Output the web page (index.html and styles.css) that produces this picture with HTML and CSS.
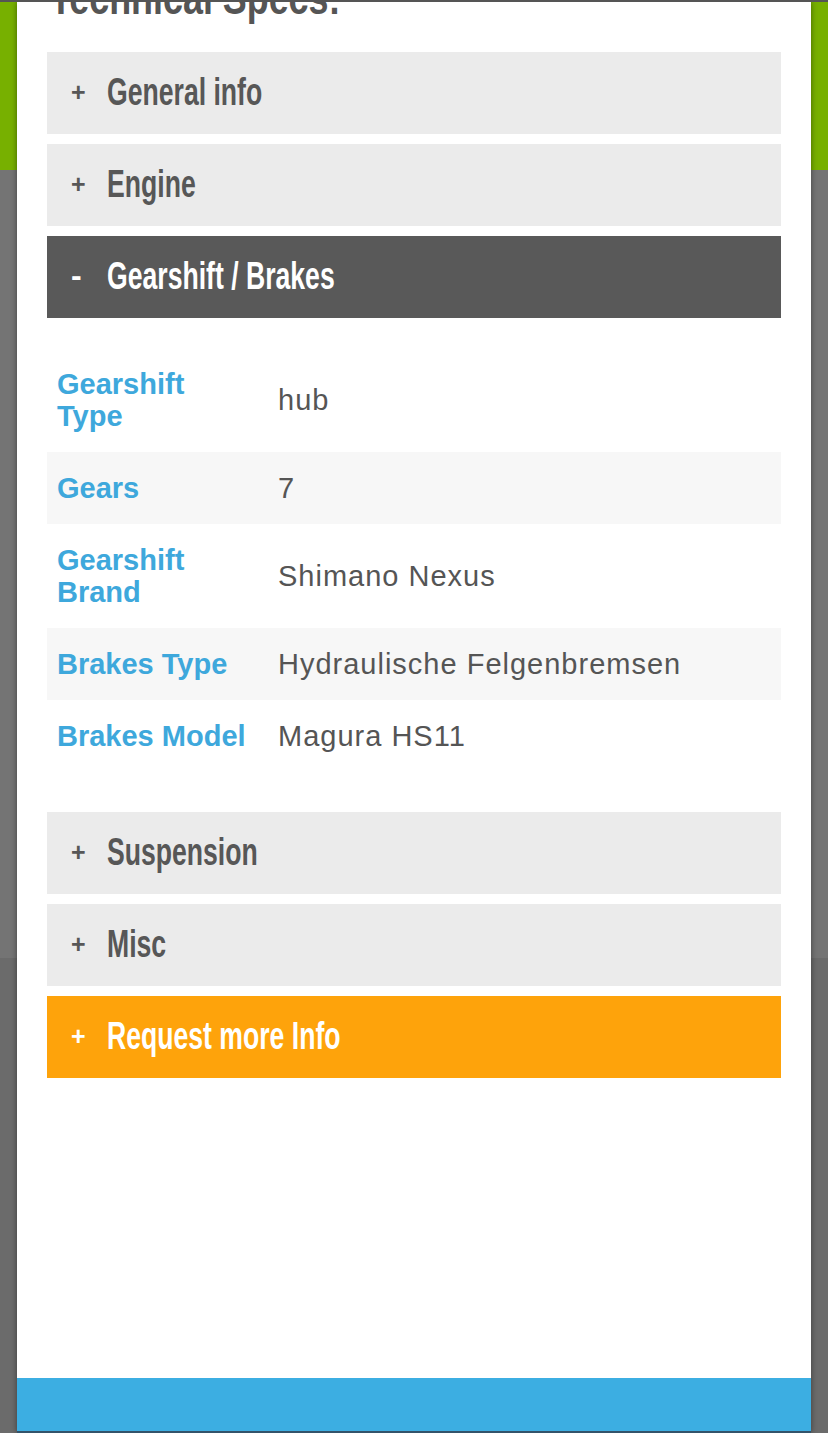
FILE: index.html
```html
<!DOCTYPE html>
<html lang="en">
<head>
<meta charset="utf-8">
<title>Technical Specs</title>
<link rel="stylesheet" href="styles.css">
</head>
<body>
<div class="backdrop">
  <div class="band-green"></div>
  <div class="band-gray"></div>
  <div class="band-gray-low"></div>
</div>
<div class="modal">
  <div class="modal-body">
    <h2 class="title"><span class="narrow">Technical Specs:</span></h2>
    <div class="acc">
      <div class="acc-head"><span class="sign">+</span><span class="acc-title">General info</span></div>
      <div class="acc-head"><span class="sign">+</span><span class="acc-title">Engine</span></div>
      <div class="acc-head open"><span class="sign minus">-</span><span class="acc-title">Gearshift / Brakes</span></div>
      <table class="specs">
        <tr><th>Gearshift Type</th><td>hub</td></tr>
        <tr><th>Gears</th><td>7</td></tr>
        <tr><th>Gearshift Brand</th><td>Shimano Nexus</td></tr>
        <tr><th>Brakes Type</th><td>Hydraulische Felgenbremsen</td></tr>
        <tr><th>Brakes Model</th><td>Magura HS11</td></tr>
      </table>
      <div class="acc-head"><span class="sign">+</span><span class="acc-title">Suspension</span></div>
      <div class="acc-head"><span class="sign">+</span><span class="acc-title">Misc</span></div>
      <div class="acc-head request"><span class="sign">+</span><span class="acc-title">Request more Info</span></div>
    </div>
  </div>
  <div class="modal-foot"></div>
</div>
</body>
</html>
```
FILE: styles.css
```css
html, body {
  margin: 0;
  padding: 0;
  height: 1433px;
  overflow: hidden;
}
body {
  position: relative;
  background: #6c6c6c;
  border-top: 2px solid #555555;
  box-sizing: border-box;
  font-family: "Liberation Sans", Arial, sans-serif;
}
.backdrop {
  display: flex;
  flex-direction: column;
}
.band-green {
  height: 168px;
  background: #77b000;
}
.band-gray {
  height: 788px;
  background: #747474;
}
.band-gray-low {
  height: 475px;
  background: #6b6b6b;
}
.modal {
  position: absolute;
  top: 0;
  left: 17px;
  width: 794px;
  bottom: 0;
  background: #ffffff;
  display: flex;
  flex-direction: column;
  overflow: hidden;
  box-shadow: 0 0 6px rgba(0, 0, 0, 0.45);
}
.modal-body {
  flex: 1;
  padding: 0 30px;
}
.title {
  margin: -27px 0 31px 3px;
  font-weight: bold;
  font-size: 46px;
  line-height: 46px;
  color: #555555;
  white-space: nowrap;
}
.narrow {
  display: inline-block;
  transform: scaleX(0.78);
  transform-origin: left center;
}
.acc-head {
  height: 82px;
  margin-bottom: 10px;
  background: #ebebeb;
  color: #575757;
  display: flex;
  align-items: center;
  padding-left: 24px;
  box-sizing: border-box;
  white-space: nowrap;
}
.acc-head.open {
  background: #595959;
  color: #ffffff;
  margin-bottom: 30px;
}
.acc-head.request {
  background: #fea30b;
  color: #ffffff;
}
.sign {
  width: 36px;
  font-weight: bold;
  font-size: 25px;
  line-height: 24px;
  padding-bottom: 2px;
}
.sign.minus {
  font-size: 32px;
  padding-bottom: 4px;
}
.acc-title {
  display: inline-block;
  font-weight: bold;
  font-size: 38px;
  line-height: 40px;
  transform: scaleX(0.70);
  transform-origin: left center;
  padding-bottom: 2px;
}
.specs {
  width: 100%;
  border-collapse: collapse;
  margin-bottom: 40px;
}
.specs tr:nth-child(even) {
  background: #f7f7f7;
}
.specs th {
  width: 191px;
  padding: 20px 20px 20px 10px;
  text-align: left;
  vertical-align: middle;
  font-weight: bold;
  font-size: 29px;
  line-height: 32px;
  color: #3ea8dc;
}
.specs td {
  padding: 20px 10px 20px 10px;
  vertical-align: middle;
  font-size: 29px;
  line-height: 32px;
  letter-spacing: 1px;
  color: #555555;
}
.modal-foot {
  height: 53px;
  background: #3caee2;
  border-bottom: 2px solid #33536a;
}
```
